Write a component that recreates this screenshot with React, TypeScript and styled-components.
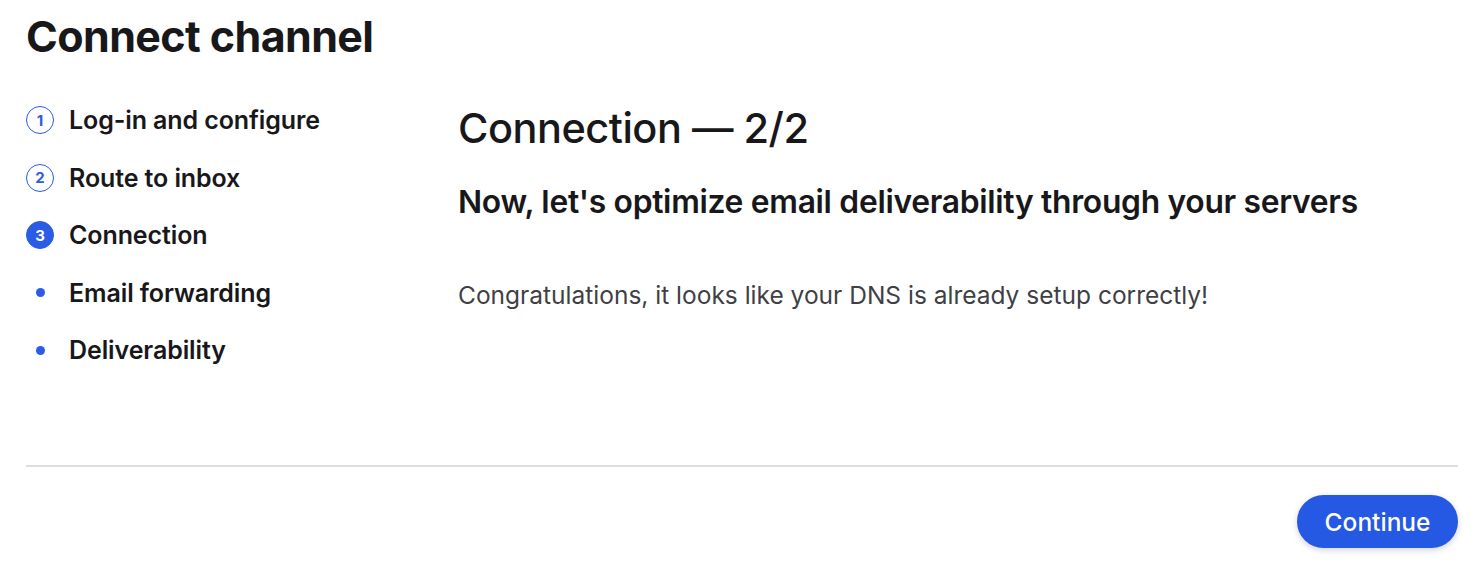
import React from 'react'
import styled, { createGlobalStyle } from 'styled-components'

const GlobalStyle = createGlobalStyle`
  body {
    margin: 0;
    background: #fff;
    font-family: Inter, "Noto Sans", sans-serif;
    color: #18181b;
  }
`

const Page = styled.div`
  display: flex;
  flex-direction: column;
  padding: 10px 22px 0 26px;
  height: 564px;
  box-sizing: border-box;
`

const Title = styled.h1`
  margin: 0;
  font-size: 43px;
  font-weight: 700;
  letter-spacing: -0.6px;
  line-height: 52px;
`

const Body = styled.div`
  display: flex;
  margin-top: 37px;
  height: 366px;
`

const StepList = styled.ul`
  list-style: none;
  margin: 0;
  padding: 0;
  width: 432px;
  display: flex;
  flex-direction: column;
  gap: 15px;
`

const Step = styled.li`
  display: flex;
  align-items: center;
  height: 42.5px;
  gap: 15px;
  font-size: 25px;
  font-weight: 600;
  letter-spacing: -0.1px;
`

const Marker = styled.span`
  width: 28px;
  height: 28px;
  display: flex;
  align-items: center;
  justify-content: center;
  flex-shrink: 0;
`

const Circle = styled.span<{ $active?: boolean }>`
  width: 28px;
  height: 28px;
  box-sizing: border-box;
  border-radius: 50%;
  display: flex;
  align-items: center;
  justify-content: center;
  font-size: 15px;
  font-weight: 700;
  border: 1.5px solid #2a5ce6;
  color: ${(p) => (p.$active ? '#fff' : '#2a5ce6')};
  background: ${(p) => (p.$active ? '#2a5ce6' : '#fff')};
`

const Dot = styled.span`
  width: 9px;
  height: 9px;
  border-radius: 50%;
  background: #2a5ce6;
`

const Content = styled.div`
  display: flex;
  flex-direction: column;
  padding-top: 4px;
`

const Heading = styled.h2`
  margin: 0;
  font-size: 41.5px;
  font-weight: 500;
  line-height: 50px;
  letter-spacing: -0.5px;
`

const Subheading = styled.h3`
  margin: 29px 0 0;
  font-size: 31.8px;
  font-weight: 600;
  line-height: 40px;
  letter-spacing: -0.3px;
`

const Text = styled.p`
  margin: 57px 0 0;
  font-size: 24.5px;
  font-weight: 400;
  line-height: 32px;
  color: #3f3f46;
`

const Divider = styled.hr`
  margin: 0;
  border: none;
  border-top: 2px solid #dedede;
`

const Footer = styled.div`
  display: flex;
  justify-content: flex-end;
  padding-top: 28px;
`

const Button = styled.button`
  height: 53px;
  padding: 0 27.5px;
  border: none;
  border-radius: 27px;
  background: #2558e3;
  color: #fff;
  font-family: inherit;
  font-size: 24.5px;
  font-weight: 500;
  box-shadow: 0 2px 6px rgba(0, 0, 0, 0.18);
  cursor: pointer;
`

const steps = [
  { label: 'Log-in and configure', num: 1 },
  { label: 'Route to inbox', num: 2 },
  { label: 'Connection', num: 3, active: true },
  { label: 'Email forwarding' },
  { label: 'Deliverability' },
]

export default function App() {
  return (
    <>
      <GlobalStyle />
      <Page>
        <Title>Connect channel</Title>
        <Body>
          <StepList>
            {steps.map((s) => (
              <Step key={s.label}>
                <Marker>
                  {s.num ? <Circle $active={s.active}>{s.num}</Circle> : <Dot />}
                </Marker>
                {s.label}
              </Step>
            ))}
          </StepList>
          <Content>
            <Heading>Connection — 2/2</Heading>
            <Subheading>Now, let's optimize email deliverability through your servers</Subheading>
            <Text>Congratulations, it looks like your DNS is already setup correctly!</Text>
          </Content>
        </Body>
        <Divider />
        <Footer>
          <Button>Continue</Button>
        </Footer>
      </Page>
    </>
  )
}
